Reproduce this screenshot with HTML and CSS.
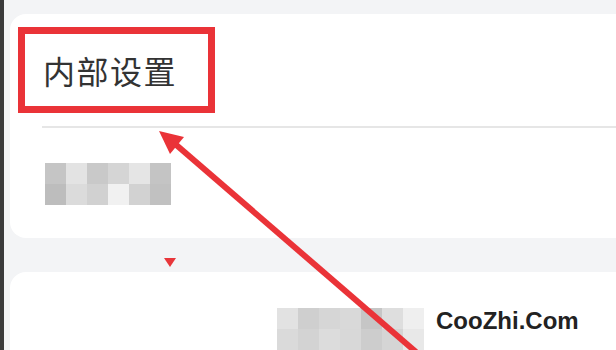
FILE: index.html
```html
<!DOCTYPE html>
<html lang="zh">
<head>
<meta charset="utf-8">
<link rel="stylesheet" href="styles.css">
</head>
<body>
<div class="page">
  <div class="edge"></div>
  <div class="main">
    <section class="card card-top">
      <div class="title-box"><h1 class="title">内部设置</h1></div>
      <div class="divider"></div>
      <div class="mosaic">
        <i style="background:#c5c5c5"></i><i style="background:#e3e3e3"></i><i style="background:#c9c9c9"></i><i style="background:#d5d5d5"></i><i style="background:#e5e5e5"></i><i style="background:#c4c4c4"></i>
        <i style="background:#bdbdbd"></i><i style="background:#dbdbdb"></i><i style="background:#d1d1d1"></i><i style="background:#f1f1f1"></i><i style="background:#d2d2d2"></i><i style="background:#c1c1c1"></i>
      </div>
    </section>
    <div class="gap"><span class="tri"></span></div>
    <section class="card card-bottom">
      <div class="mosaic mosaic2">
        <i style="background:#e2e2e2"></i><i style="background:#cfcfcf"></i><i style="background:#d6d6d6"></i><i style="background:#d9d9d9"></i><i style="background:#c6c6c6"></i><i style="background:#dedede"></i><i style="background:#efefef"></i>
        <i style="background:#dadada"></i><i style="background:#d3d3d3"></i><i style="background:#dcdcdc"></i><i style="background:#d8d8d8"></i><i style="background:#cdcdcd"></i><i style="background:#d5d5d5"></i><i style="background:#e8e8e8"></i>
      </div>
    </section>
  </div>
  <svg class="arrow" width="616" height="350" viewBox="0 0 616 350">
    <line x1="174" y1="143" x2="416" y2="352" stroke="#ea3338" stroke-width="6"/>
    <polygon points="159,131 184,137 170,154" fill="#ea3338"/>
  </svg>
  <div class="watermark">CooZhi.Com</div>
</div>
</body>
</html>
```
FILE: styles.css
```css
html, body {
  margin: 0;
  padding: 0;
}
body {
  width: 616px;
  height: 350px;
  overflow: hidden;
  background: #f3f4f6;
  font-family: "Noto Sans CJK SC", "Liberation Sans", sans-serif;
}
.page {
  position: relative;
  display: flex;
  width: 616px;
  height: 350px;
}
.edge {
  width: 4px;
  flex: none;
  background: #3b3b3b;
}
.main {
  flex: 1;
  display: flex;
  flex-direction: column;
  padding: 14px 0 0 6px;
}
.card {
  background: #ffffff;
  border-radius: 16px 0 0 16px;
}
.card-top {
  height: 224px;
  display: flex;
  flex-direction: column;
}
.title-box {
  margin: 13px 0 0 8px;
  width: 183px;
  height: 72px;
  border: 7px solid #ea3338;
  display: flex;
  align-items: center;
  box-sizing: content-box;
}
.title {
  margin: 0 0 0 18px;
  font-size: 32px;
  font-weight: 400;
  color: #333333;
  line-height: 1;
  letter-spacing: 1.5px;
}
.divider {
  margin: 13px 0 0 32px;
  height: 2px;
  background: #e6e6e6;
}
.mosaic {
  margin: 35px 0 0 35px;
  display: grid;
  grid-template-columns: repeat(6, 21px);
  grid-auto-rows: 21px;
}
.mosaic i {
  display: block;
}
.gap {
  height: 34px;
  position: relative;
}
.tri {
  position: absolute;
  left: 154px;
  top: 20px;
  width: 0;
  height: 0;
  border-left: 6px solid transparent;
  border-right: 6px solid transparent;
  border-top: 9px solid #e8363b;
}
.card-bottom {
  flex: 1;
  border-radius: 16px 0 0 0;
}
.mosaic2 {
  margin: 36px 0 0 267px;
  grid-template-columns: repeat(7, 21px);
}
.arrow {
  position: absolute;
  left: 0;
  top: 0;
}
.watermark {
  position: absolute;
  left: 436px;
  top: 305px;
  font-family: "Liberation Sans", Arial, sans-serif;
  font-weight: 700;
  font-size: 24px;
  color: #222222;
  line-height: 32px;
}
```
